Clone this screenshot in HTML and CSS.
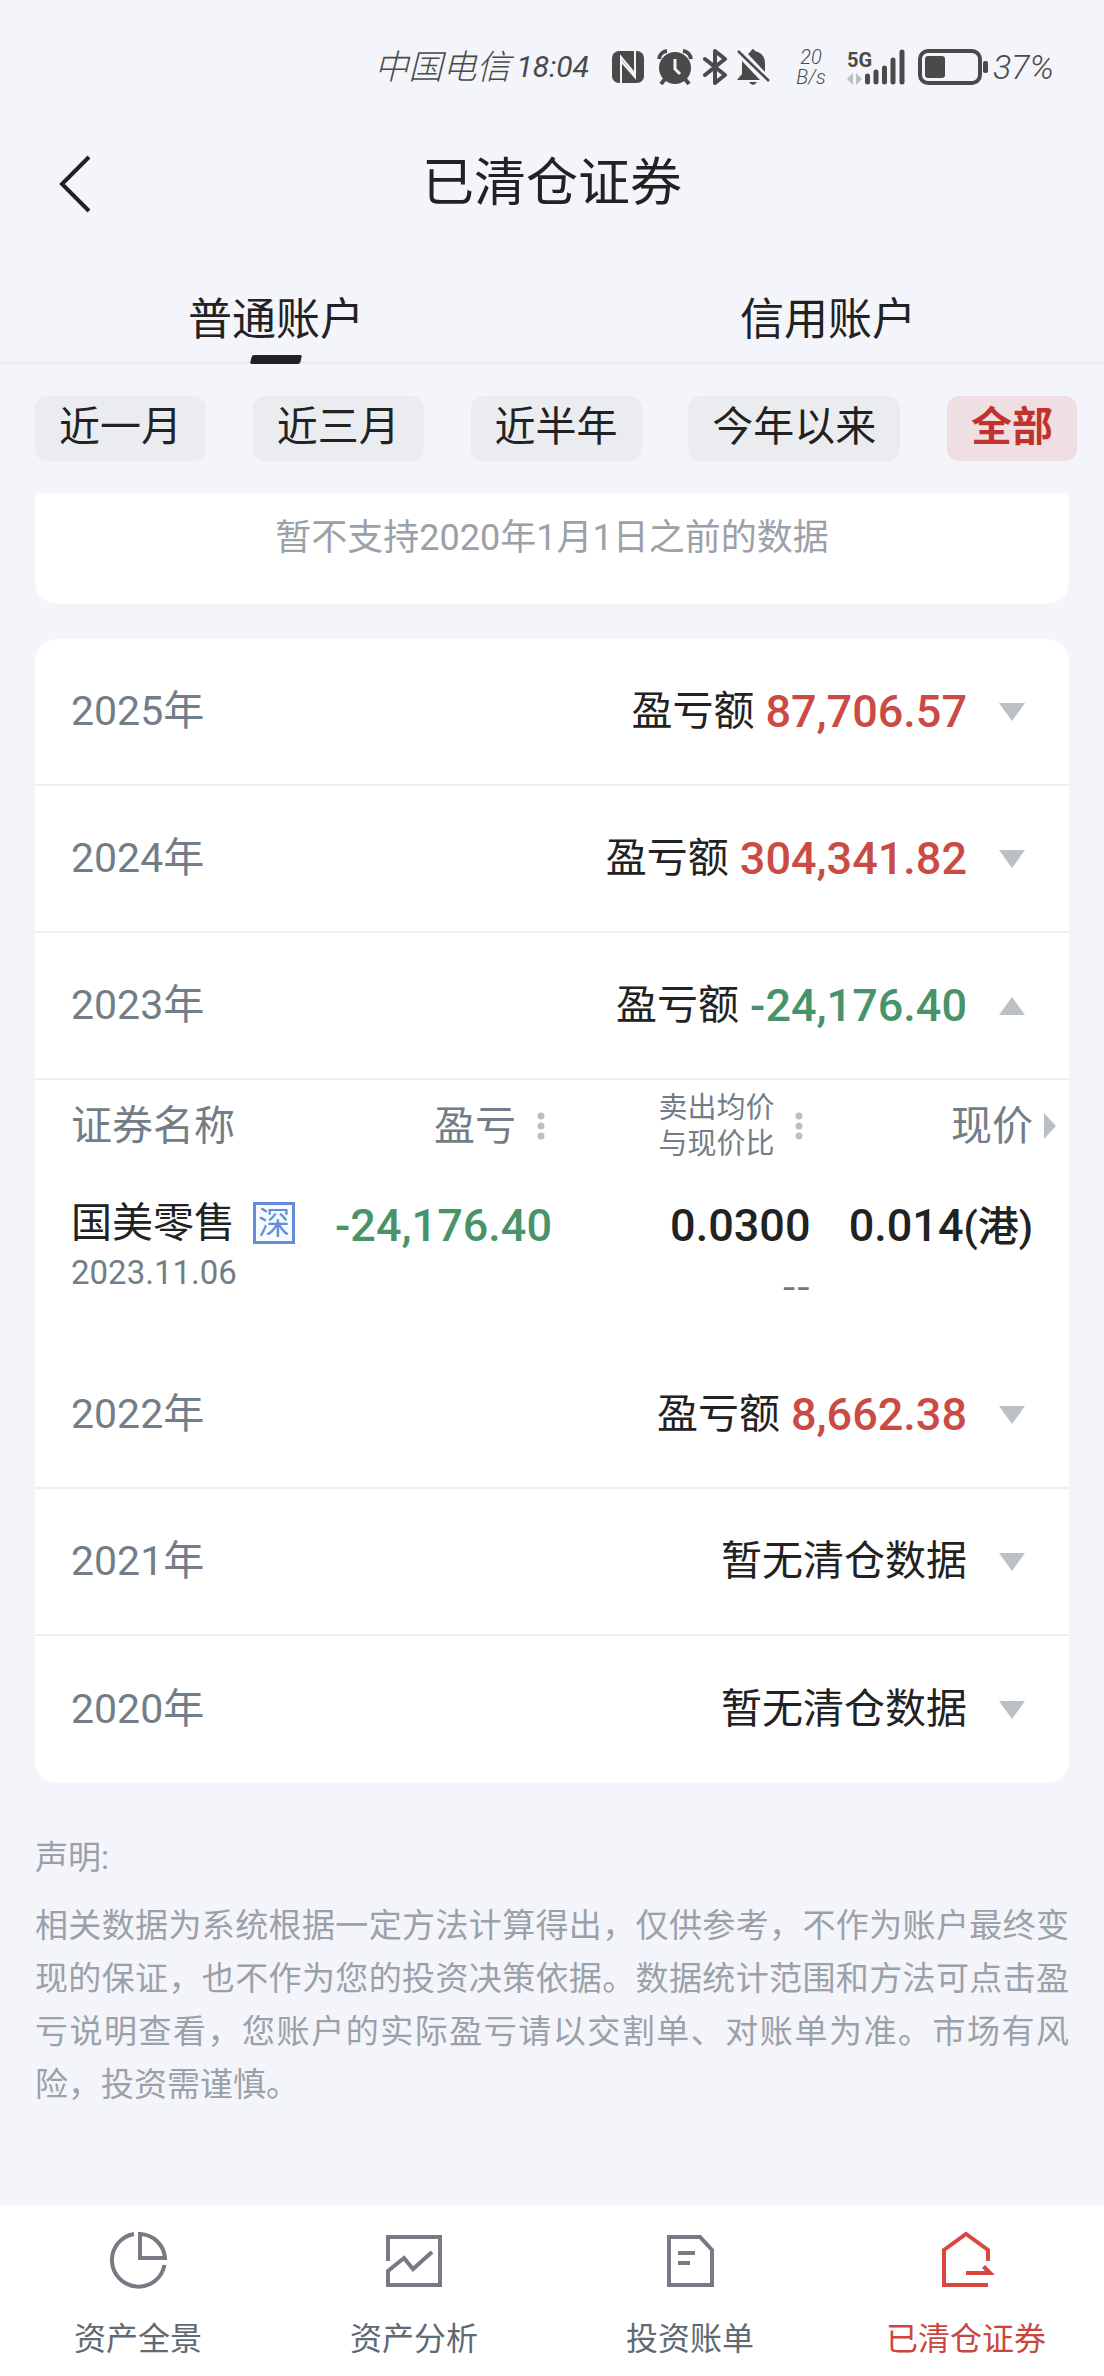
FILE: index.html
```
<!DOCTYPE html>
<html lang="zh-CN">
<head>
    <meta charset="UTF-8">
    <meta name="viewport" content="width=device-width, initial-scale=1.0">
    <title>已清仓证券</title>
    <link rel="stylesheet" href="styles.css">
</head>
<body>
    <div class="status-bar">
        <span class="carrier">中国电信</span>
        <span class="clock">18:04</span>
        <svg class="status-icon nfc" width="34" height="34" viewBox="0 0 34 34">
            <rect x="1" y="1" width="32" height="32" rx="7" fill="#4a4a4a"/>
            <path d="M10 33V7l14 17V9M24 1v26L10 11" fill="none" stroke="#f4f5fa" stroke-width="2"/>
        </svg>
        <svg class="status-icon alarm" width="36" height="36" viewBox="0 0 36 36">
            <circle cx="18" cy="19" r="16" fill="#4a4a4a"/>
            <path d="M2 10a9 9 0 0 1 8-8M34 10a9 9 0 0 0-8-8M8 30l-4 5M28 30l4 5" fill="none" stroke="#4a4a4a" stroke-width="4"/>
            <path d="M18 10v10l5 5" fill="none" stroke="#f4f5fa" stroke-width="3"/>
        </svg>
        <svg class="status-icon bluetooth" width="24" height="36" viewBox="0 0 24 36">
            <path d="M2 10l20 16-10 8V2l10 8L2 26" fill="none" stroke="#4a4a4a" stroke-width="4" stroke-linejoin="round" stroke-linecap="round"/>
        </svg>
        <svg class="status-icon bell" width="34" height="38" viewBox="0 0 34 38">
            <path d="M14 3q2-4 4 0c6 1 10 6 10 12v9L11 6zM5 13l18 19H0l5-6zM12 34h8q-4 6-8 0z" fill="#4a4a4a"/>
            <path d="M1 3l31 30" stroke="#4a4a4a" stroke-width="2.5"/>
        </svg>
        <span class="speed">20<br>B/s</span>
        <svg class="status-icon signal" width="58" height="38" viewBox="0 0 58 38">
            <text class="network" x="0" y="19">5G</text>
            <path d="M6 25v12l-6-6zM9 25v12l6-6z" fill="#bfbfc2"/>
            <path d="M20.500 28v6M29 24v10M37.500 20v14M46 12v22M55 4v30" stroke="#4a4a4a" stroke-width="5" stroke-linecap="round"/>
        </svg>
        <svg class="status-icon battery" width="71" height="36" viewBox="0 0 71 36">
            <rect x="2" y="2" width="60" height="32" rx="8" fill="none" stroke="#4a4a4a" stroke-width="4"/>
            <rect x="7" y="7" width="20" height="22" rx="3" fill="#4a4a4a"/>
            <rect x="65" y="12" width="5" height="12" rx="2" fill="#4a4a4a"/>
        </svg>
        <span class="percent">37%</span>
    </div>

    <header class="header">
        <button class="back" aria-label="返回">
            <svg width="34" height="58" viewBox="0 0 34 58">
                <path d="M31 2L4 29l27 27" fill="none" stroke="#222" stroke-width="4"/>
            </svg>
        </button>
        <h1>已清仓证券</h1>
    </header>

    <div class="tabs">
        <button class="tab active">普通账户</button>
        <button class="tab">信用账户</button>
    </div>

    <div class="filters">
        <button class="chip">近一月</button>
        <button class="chip">近三月</button>
        <button class="chip">近半年</button>
        <button class="chip">今年以来</button>
        <button class="chip active">全部</button>
    </div>

    <main>
        <p class="notice">暂不支持2020年1月1日之前的数据</p>

        <div class="card">
            <button class="year-row">
                <span class="year">2025年</span>
                <span class="label">盈亏额</span>
                <span class="amount up">87,706.57</span>
                <span class="arrow"></span>
            </button>
            <button class="year-row">
                <span class="year">2024年</span>
                <span class="label">盈亏额</span>
                <span class="amount up">304,341.82</span>
                <span class="arrow"></span>
            </button>
            <button class="year-row">
                <span class="year">2023年</span>
                <span class="label">盈亏额</span>
                <span class="amount down">-24,176.40</span>
                <span class="arrow open"></span>
            </button>
            <table class="detail">
                <thead>
                    <tr>
                        <th class="col-name">证券名称</th>
                        <th class="col-profit">
                            <div class="sort">盈亏
                                <svg width="14" height="30" viewBox="0 0 14 30"><path d="M7 5v0M7 15v0M7 25v0" stroke="#bbc0c5" stroke-width="7" stroke-linecap="round"/></svg>
                            </div>
                        </th>
                        <th class="col-ratio">
                            <div class="sort"><span class="small">卖出均价<br>与现价比</span>
                                <svg width="14" height="30" viewBox="0 0 14 30"><path d="M7 5v0M7 15v0M7 25v0" stroke="#bbc0c5" stroke-width="7" stroke-linecap="round"/></svg>
                            </div>
                        </th>
                        <th class="col-price">
                            <div class="sort more">现价
                                <svg width="12" height="26" viewBox="0 0 12 26"><path d="M0 0l12 13L0 26z" fill="#bbc0c5"/></svg>
                            </div>
                        </th>
                    </tr>
                </thead>
                <tbody>
                    <tr>
                        <td class="col-name">
                            <div class="stock">国美零售 <span class="market">深</span></div>
                            <div class="date">2023.11.06</div>
                        </td>
                        <td class="num down">-24,176.40</td>
                        <td class="num">0.0300<div class="ratio">--</div></td>
                        <td class="num last">0.014<span class="hk">(港)</span></td>
                    </tr>
                </tbody>
            </table>
            <button class="year-row">
                <span class="year">2022年</span>
                <span class="label">盈亏额</span>
                <span class="amount up">8,662.38</span>
                <span class="arrow"></span>
            </button>
            <button class="year-row">
                <span class="year">2021年</span>
                <span class="label">暂无清仓数据</span>
                <span class="arrow"></span>
            </button>
            <button class="year-row">
                <span class="year">2020年</span>
                <span class="label">暂无清仓数据</span>
                <span class="arrow"></span>
            </button>
        </div>

        <div class="statement">
            <p>声明:</p>
            <p>相关数据为系统根据一定方法计算得出，仅供参考，不作为账户最终变现的保证，也不作为您的投资决策依据。数据统计范围和方法可点击盈亏说明查看，您账户的实际盈亏请以交割单、对账单为准。市场有风险，投资需谨慎。</p>
        </div>
    </main>

    <nav class="bottom-nav">
        <a href="#">
            <svg width="60" height="60" viewBox="0 0 60 60">
                <path d="M26 4A26.500 26.500 0 1 0 56.500 35M32 4v24h25A26 26 0 0 0 32 4z"/>
            </svg>
            资产全景
        </a>
        <a href="#">
            <svg width="60" height="60" viewBox="0 0 60 60">
                <path d="M4 31V7h52v48H4V41l16-13 9 11 19-17"/>
            </svg>
            资产分析
        </a>
        <a href="#">
            <svg width="60" height="60" viewBox="0 0 60 60">
                <path d="M9 7h31l12 13v35H9zM18 23h17M18 33h12"/>
            </svg>
            投资账单
        </a>
        <a href="#" class="active">
            <svg width="60" height="60" viewBox="0 0 60 60">
                <path d="M52 31V20L30 4 8 20v35h44M30 43h22"/>
                <path class="tip" d="M49 35l10 10H46l3-4-3-3z"/>
            </svg>
            已清仓证券
        </a>
    </nav>
</body>
</html>
```

FILE: styles.css
```
* {
    box-sizing: border-box;
}
body {
    margin: 0;
    min-height: 100vh;
    display: flex;
    flex-direction: column;
    background-color: #f4f5fa;
    color: #222;
    font-family: Roboto, "Noto Sans CJK SC", sans-serif;
    font-size: 41px;
}
button {
    padding: 0;
    border: none;
    background: none;
    color: inherit;
    font: inherit;
    cursor: pointer;
}
p, h1 {
    margin: 0;
}
svg {
    display: block;
    flex: none;
}

/* Status bar */
.status-bar {
    display: flex;
    align-items: center;
    justify-content: flex-end;
    height: 134px;
    padding-right: 50px;
    color: #4a4a4a;
    font-size: 34px;
    line-height: 40px;
    white-space: nowrap;
}
.carrier, .clock, .percent, .speed {
    font-style: italic;
}
.carrier {
    font-weight: 300;
}
.clock {
    margin-left: 6px;
    font-size: 30px;
}
.nfc {
    margin-left: 22px;
}
.alarm {
    margin-left: 12px;
}
.bluetooth {
    margin-left: 10px;
}
.bell {
    margin-left: 10px;
}
.speed {
    width: 32px;
    margin: 0 20px 0 24px;
    font-size: 20px;
    font-weight: 300;
    line-height: 20px;
    text-align: center;
}
.network {
    font-size: 20px;
    font-weight: 700;
    fill: #4a4a4a;
}
.battery {
    margin-left: 13px;
}
.percent {
    margin-left: 4px;
    font-weight: 300;
}

/* Title */
.header {
    position: relative;
    height: 96px;
    text-align: center;
}
.header h1 {
    font-size: 52px;
    font-weight: 400;
    line-height: 100px;
}
.back {
    position: absolute;
    left: 58px;
    top: 21px;
}

/* Account tabs */
.tabs {
    display: flex;
    border-bottom: 3px solid #ebecef;
}
.tab {
    position: relative;
    flex: 1;
    padding: 60px 0 11px;
    font-size: 44px;
    line-height: 60px;
}
.tab.active::after {
    content: "";
    position: absolute;
    left: 50%;
    bottom: -3px;
    width: 50px;
    height: 9px;
    margin-left: -25px;
    border-radius: 2px;
    background-color: #222;
    transform: skewX(-14deg);
}

/* Period filters */
.filters {
    display: flex;
    justify-content: space-between;
    padding: 32px 27px 32px 35px;
}
.chip {
    padding: 0 24px 2px;
    border-radius: 12px;
    background-color: #ebecef;
    line-height: 63px;
}
.chip.active {
    background-color: #f0dfe2;
    color: #c2322c;
    font-weight: 700;
}

/* Cards */
main {
    flex: 1;
    padding: 0 35px 48px;
}
.notice {
    padding-bottom: 21px;
    border-radius: 0 0 22px 22px;
    background-color: #fff;
    color: #9ba1a8;
    font-size: 36px;
    line-height: 90px;
    text-align: center;
}
.card {
    margin-top: 35px;
    border-radius: 22px;
    background-color: #fff;
    overflow: hidden;
}
.year-row {
    display: flex;
    align-items: center;
    width: 100%;
    height: 147px;
    padding: 0 44px 0 36px;
    border-bottom: 2px solid #eeeff1;
    line-height: 54px;
    text-align: left;
}
.year-row:last-child {
    border-bottom: none;
}
.year {
    flex: 1;
    color: #737d87;
}
.year, .label {
    padding-bottom: 2px;
}
.amount {
    margin-left: 11px;
    font-size: 45px;
    font-weight: 500;
}
.up {
    color: #c94b44;
}
.down {
    color: #49936b;
}
.arrow {
    margin-left: 32px;
    border: 13px solid transparent;
    border-top: 18px solid #bbc0c5;
    border-bottom: 0;
}
.arrow.open {
    border-top: 0;
    border-bottom: 18px solid #bbc0c5;
}

/* Cleared stocks of the open year */
.detail {
    width: 100%;
    border-collapse: collapse;
    table-layout: fixed;
}
.detail th {
    height: 92px;
    padding: 0;
    color: #737d87;
    font-weight: 400;
    line-height: 54px;
    text-align: left;
}
.detail td {
    padding: 24px 0 46px;
    vertical-align: top;
}
.detail .col-name {
    width: 27%;
    padding-left: 36px;
}
.col-profit {
    width: 23%;
}
.col-ratio, .col-price {
    width: 25%;
}
.sort {
    display: flex;
    align-items: center;
    justify-content: flex-end;
    gap: 18px;
    padding-right: 4px;
}
.sort.more {
    gap: 11px;
    padding-right: 13px;
}
.small {
    font-size: 29px;
    line-height: 36px;
}
.stock {
    display: flex;
    align-items: center;
    gap: 18px;
    line-height: 54px;
    white-space: nowrap;
}
.market {
    width: 42px;
    height: 42px;
    border: 3px solid #648cd8;
    background-color: #f5fbff;
    color: #648cd8;
    font-size: 32px;
    line-height: 36px;
    text-align: center;
}
.date {
    color: #737d87;
    font-size: 33px;
    line-height: 46px;
}
.detail .num {
    padding-top: 27px;
    padding-bottom: 0;
    font-size: 45px;
    font-weight: 500;
    line-height: 54px;
    text-align: right;
    white-space: nowrap;
}
.detail .last {
    padding-right: 36px;
}
.hk {
    font-size: 41px;
}
.ratio {
    color: #777;
    font-family: "Noto Sans CJK SC", sans-serif;
    font-size: 41px;
    font-weight: 400;
    line-height: 58px;
}

/* Statement */
.statement {
    margin-top: 48px;
    color: #9ba1a8;
    font-size: 33px;
    line-height: 53px;
    text-align: justify;
}
.statement p + p {
    margin-top: 15px;
}

/* Bottom navigation */
.bottom-nav {
    display: flex;
    padding: 25px 0 17px;
    background-color: #fff;
}
.bottom-nav a {
    flex: 1;
    display: flex;
    flex-direction: column;
    align-items: center;
    gap: 29px;
    color: #5f6a74;
    font-size: 32px;
    line-height: 40px;
    text-decoration: none;
}
.bottom-nav svg {
    fill: none;
    stroke: #777a82;
    stroke-width: 4;
}
.bottom-nav .active {
    color: #c9473f;
}
.bottom-nav .active svg {
    stroke: #d9473f;
}
.bottom-nav .tip {
    fill: #d9473f;
    stroke: none;
}
```
